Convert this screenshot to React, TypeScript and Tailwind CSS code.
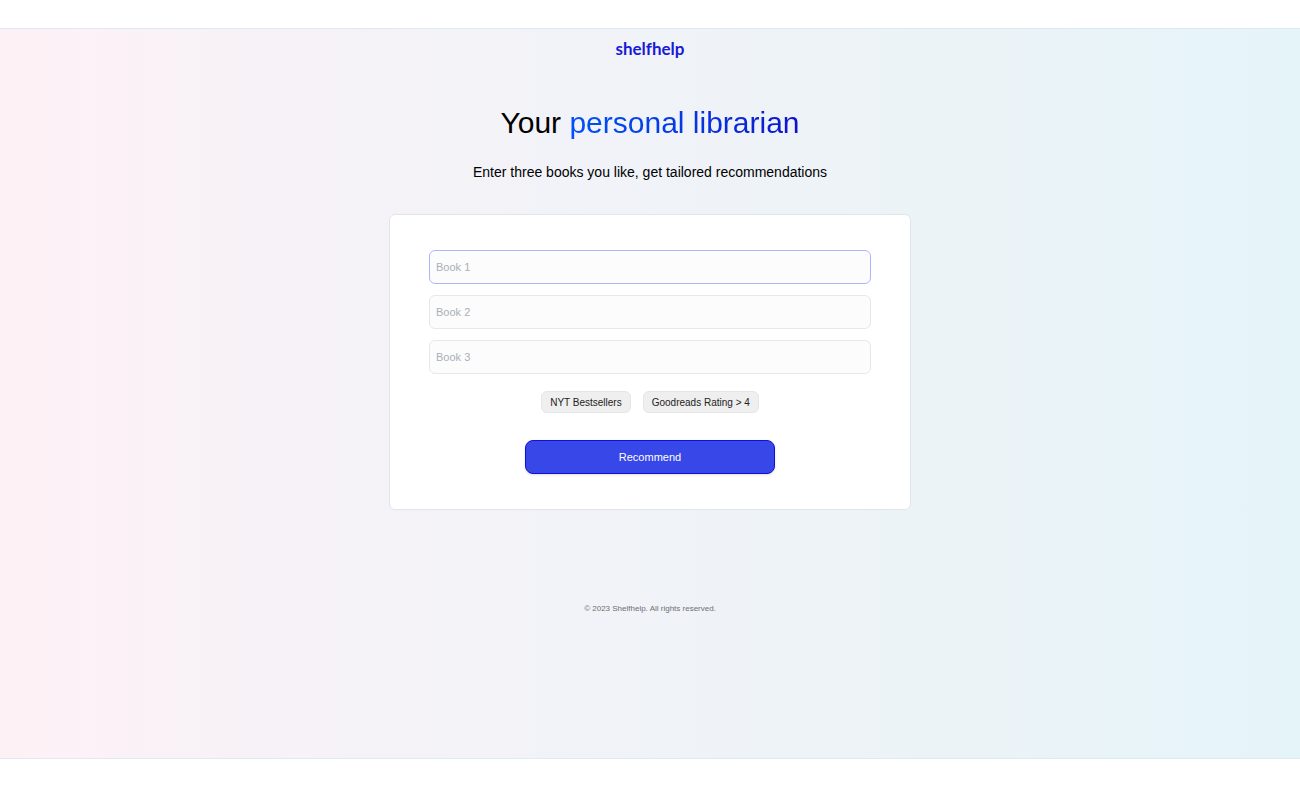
import { useState } from 'react';
import type { FormEvent } from 'react';

const BOOK_FIELDS = ['Book 1', 'Book 2', 'Book 3'];
const FILTERS = ['NYT Bestsellers', 'Goodreads Rating > 4'];

function App() {
  const [books, setBooks] = useState<string[]>(['', '', '']);
  const [activeFilters, setActiveFilters] = useState<string[]>([]);

  const updateBook = (index: number, value: string) => {
    setBooks((prev) => prev.map((book, i) => (i === index ? value : book)));
  };

  const toggleFilter = (filter: string) => {
    setActiveFilters((prev) =>
      prev.includes(filter) ? prev.filter((f) => f !== filter) : [...prev, filter],
    );
  };

  const handleSubmit = (e: FormEvent) => {
    e.preventDefault();
  };

  return (
    <div className="min-h-screen bg-white py-7 font-['Liberation_Sans',Arial,sans-serif] text-black">
      <div className="flex min-h-[calc(100vh-57px)] flex-col items-center border-y border-[#dcebf3] bg-[linear-gradient(to_right,#fef1f6,#f7f2f7_20%,#f0f3f8_50%,#ebf3f7_76%,#e5f4f9)] px-4">
        <header className="pt-2">
          <a
            href="#"
            className="block font-['Lato',sans-serif] text-[17px] leading-6 font-bold text-[#1a1ad6] [font-variant-ligatures:none]"
          >
            shelfhelp
          </a>
        </header>

        <main className="flex w-full flex-col items-center">
          <h1 className="mt-11 text-center text-[30px] leading-9">
            Your{' '}
            <span className="bg-linear-to-r from-[#0052f5] to-[#1010cc] bg-clip-text text-transparent">
              personal librarian
            </span>
          </h1>
          <p className="mt-[19px] text-center text-sm leading-6">
            Enter three books you like, get tailored recommendations
          </p>

          <form
            onSubmit={handleSubmit}
            className="mt-[30px] flex w-full max-w-[522px] flex-col items-center rounded-md border border-[#e2e4ec] bg-white px-[39px] py-[35px]"
          >
            <div className="flex w-full flex-col gap-[11px]">
              {BOOK_FIELDS.map((label, i) => (
                <input
                  key={label}
                  type="text"
                  aria-label={label}
                  placeholder={label}
                  value={books[i]}
                  onChange={(e) => updateBook(i, e.target.value)}
                  className="h-[34px] w-full rounded-md border border-[#e8e8ea] bg-[#fcfcfc] px-1.5 text-[11px] outline-none placeholder:text-[#a9afba] first:border-[#b0b5fa] focus:border-[#b0b5fa]"
                />
              ))}
            </div>

            <div className="mt-[17px] flex flex-wrap justify-center gap-3">
              {FILTERS.map((filter) => (
                <button
                  key={filter}
                  type="button"
                  aria-pressed={activeFilters.includes(filter)}
                  onClick={() => toggleFilter(filter)}
                  className="h-[22px] rounded-md border border-[#e6e6e6] bg-[#efefef] px-2 text-[10px] text-[#222] aria-pressed:border-[#b0b5fa]"
                >
                  {filter}
                </button>
              ))}
            </div>

            <button
              type="submit"
              className="mt-[27px] h-[34px] w-full max-w-[250px] rounded-lg border border-[#1010dc] bg-[#3747e8] text-[11px] text-white shadow shadow-black/10"
            >
              Recommend
            </button>
          </form>
        </main>

        <footer className="mt-[91px] pb-6">
          <p className="text-[8px] leading-4 text-[#6f6f70]">
            © 2023 Shelfhelp. All rights reserved.
          </p>
        </footer>
      </div>
    </div>
  );
}

export default App;
